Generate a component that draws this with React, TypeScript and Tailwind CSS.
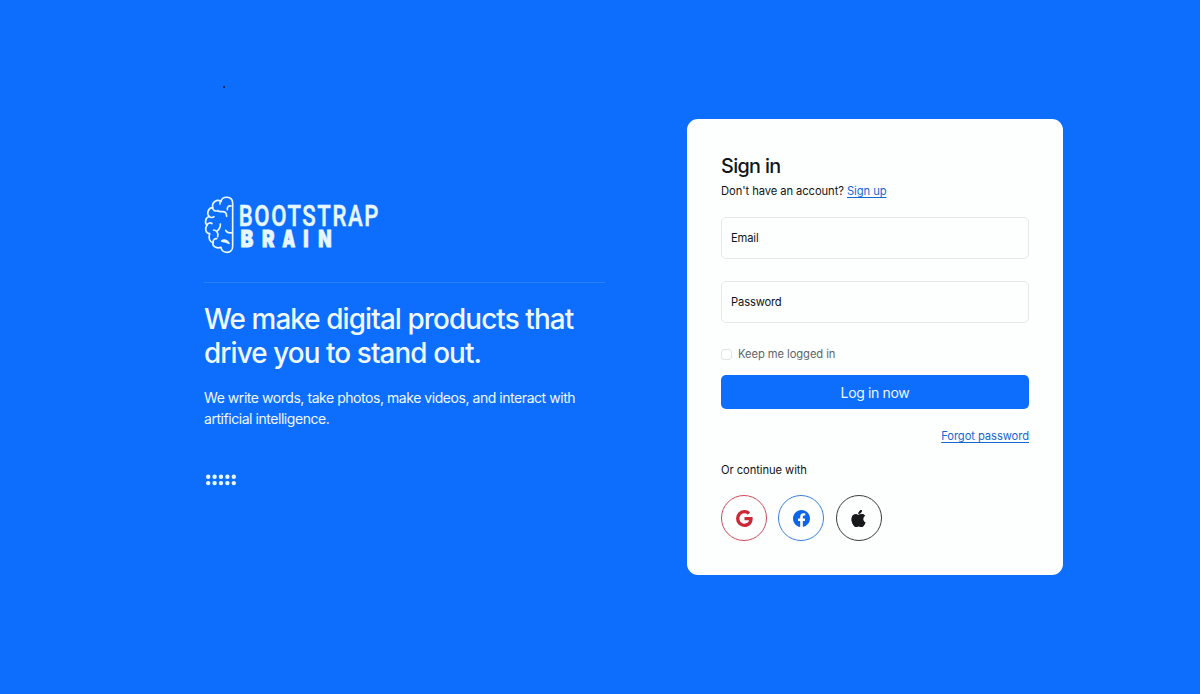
import { BsGoogle, BsFacebook, BsApple } from "react-icons/bs";

function Logo() {
  return (
    <svg className="block h-[60px] w-[180px]" viewBox="0 0 180 60" fill="none">
      <g
        transform="translate(-9 -10) scale(.33333)"
        stroke="#e6f7ff"
        strokeWidth="5"
        strokeLinecap="round"
        strokeLinejoin="round"
      >
        <path d="M113 54C112 32 82 32 78 49C65 41 50 52 53 68C40 69 34 84 42 94C30 100 29 115 36 120C28 132 33 145 44 146C39 160 45 172 54 173C51 184 66 192 78 187C80 206 113 209 113 184Z" />
        <path d="M78 49C75 51 74 54 75 57" />
        <path d="M108 63C101 61 96 66 97 74" />
        <path d="M53 68C54 76 60 80 68 77M68 77C76 84 84 76 91 82C94 85 95 89 95 94" />
        <path d="M42 94C46 98 53 98 57 95" />
        <path d="M36 120C40 113 47 112 51 116" />
        <path d="M76 117C77 128 72 134 65 139C68 143 70 149 68 155M65 139C62 136 59 135 56 135" />
        <path d="M112 143C103 145 95 142 92 136" />
        <path d="M54 173C54 165 59 160 65 161" />
        <path d="M80 168C87 163 97 166 102 175C94 170 88 171 80 168Z" fill="#e6f7ff" />
      </g>
      <text
        fill="#e6f7ff"
        stroke="#e6f7ff"
        strokeWidth=".5"
        fontFamily="Roboto, sans-serif"
        fontSize="29.5"
        fontWeight="500"
        transform="translate(34.8 31.3) scale(.75 1)"
        textLength="186"
        lengthAdjust="spacing"
      >
        BOOTSTRAP
      </text>
      <g
        fill="#e6f7ff"
        stroke="#e6f7ff"
        strokeWidth=".8"
        fontFamily="Inter, sans-serif"
        fontSize="23.4"
        fontWeight="900"
        textAnchor="middle"
      >
        <text transform="translate(43 51.8) scale(.82 1)">B</text>
        <text transform="translate(64.3 51.8) scale(.8 1)">R</text>
        <text transform="translate(84.8 51.8) scale(.7 1)">A</text>
        <text transform="translate(101.9 51.8) scale(.78 1)">I</text>
        <text transform="translate(120.8 51.8) scale(.74 1)">N</text>
      </g>
    </svg>
  );
}

function Dots() {
  return (
    <svg className="block h-3 w-8" viewBox="0 0 32 12" fill="#e6f7ff">
      {[3.2, 9.6, 16, 22.4, 28.8].map((x) => (
        <g key={x}>
          <circle cx={x} cy="2.7" r="2.2" />
          <circle cx={x} cy="9.1" r="2.2" />
        </g>
      ))}
    </svg>
  );
}

function Intro() {
  return (
    <section className="mt-[195px] w-[401px] shrink-0 text-[#eef9ff]">
      <Logo />
      <hr className="mt-[27px] h-px border-0 bg-[#2a80ff]" />
      <h1 className="mt-[19px] whitespace-nowrap text-[27.8px] font-medium leading-[34.4px] tracking-[-0.88px]">
        We make digital products that
        <br />
        drive you to stand out.
      </h1>
      <p className="mt-[16px] whitespace-nowrap text-[14px] leading-[21.5px] tracking-[-0.45px]">
        We write words, take photos, make videos, and interact with
        <br />
        artificial intelligence.
      </p>
      <div className="mt-[44px] pl-px">
        <Dots />
      </div>
    </section>
  );
}

function Field({ label, type }: { label: string; type: string }) {
  return (
    <input
      type={type}
      placeholder={label}
      aria-label={label}
      className="block h-[42px] w-full rounded-[5px] border border-[#e6e8ea] px-[9px] text-[11.2px] tracking-[-0.15px] text-[#212529] outline-none placeholder:text-[#111418] placeholder:opacity-100"
    />
  );
}

function SignIn() {
  return (
    <form className="mt-[119px] h-[456px] w-[376px] shrink-0 rounded-[11px] bg-[#fdfffe] px-[34px] pt-[34px] text-[11.2px] leading-[17px] tracking-[-0.07px] text-[#111418]">
      <h2 className="text-[19.8px] font-medium leading-[26px] tracking-[-0.65px]">Sign in</h2>
      <p className="mt-1 whitespace-nowrap">
        Don't have an account?{" "}
        <a href="#" className="text-[#1468d2] underline underline-offset-2">
          Sign up
        </a>
      </p>
      <div className="mt-[17px] flex flex-col gap-[22px]">
        <Field label="Email" type="email" />
        <Field label="Password" type="password" />
      </div>
      <label className="mt-[23px] flex items-center gap-[6px] text-[#5f656b]">
        <input
          type="checkbox"
          className="size-[11px] appearance-none rounded-[3px] border border-[#e1e4e7] bg-white"
        />
        Keep me logged in
      </label>
      <button
        type="button"
        className="mt-[12px] flex h-[34px] w-full items-center justify-center rounded-[5px] bg-[#0d6efd] text-[14px] tracking-[-0.35px] text-[#eef9ff]"
      >
        Log in now
      </button>
      <div className="mt-[19px] text-right">
        <a href="#" className="text-[#1468d2] underline underline-offset-2">
          Forgot password
        </a>
      </div>
      <p className="mt-[17px]">Or continue with</p>
      <div className="mt-[16px] flex gap-[11.3px]">
        <a href="#" aria-label="Google" className="flex size-[46px] items-center justify-center rounded-full border border-[#d04a5a] text-[#cc2936]">
          <BsGoogle size={17} />
        </a>
        <a href="#" aria-label="Facebook" className="flex size-[46px] items-center justify-center rounded-full border border-[#3a80dd] text-[#0d66e8]">
          <BsFacebook size={17} />
        </a>
        <a href="#" aria-label="Apple" className="flex size-[46px] items-center justify-center rounded-full border border-[#3a3d40] text-[#17191b]">
          <BsApple size={17} />
        </a>
      </div>
    </form>
  );
}

export default function App() {
  return (
    <main className="relative flex h-[694px] w-[1200px] items-start overflow-hidden bg-[#0d6efd] pl-[204px] font-['Inter',sans-serif]">
      <span className="absolute left-[223px] top-[86px] size-[2px] rounded-full bg-[#06183a]" />
      <Intro />
      <div className="w-[82px] shrink-0" />
      <SignIn />
    </main>
  );
}
